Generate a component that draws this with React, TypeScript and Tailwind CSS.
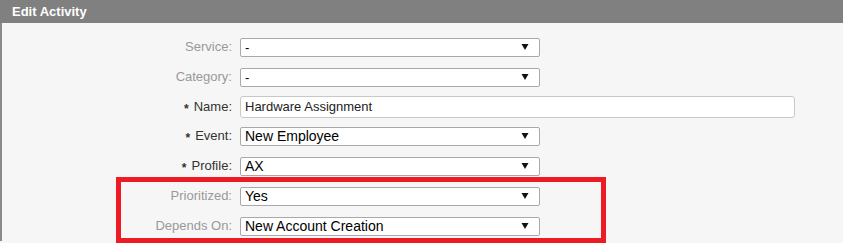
import React from "react";

const Arrow = () => (
  <svg width="8" height="7" viewBox="0 0 8 7" className="absolute right-[10px] top-1/2 -translate-y-1/2">
    <path d="M0.5 0.5 L7.5 0.5 L4 6.5 Z" fill="#111" />
  </svg>
);

const Select = ({ value, big }: { value: string; big?: boolean }) => (
  <div className="relative h-[19px] w-[300px] rounded-[2px] border border-[#a9a9a9] bg-white">
    <span
      className={`absolute left-[4px] top-1/2 -translate-y-1/2 leading-none text-black ${big ? "text-[14px]" : "text-[13px]"}`}
    >
      {value}
    </span>
    <Arrow />
  </div>
);

const Label = ({ text, req }: { text: string; req?: boolean }) => (
  <div className="flex w-[230px] shrink-0 items-center justify-end">
    {req && <span className="mr-[5px] translate-y-[2px] text-[12px] font-bold leading-none text-[#333]">*</span>}
    <span className={`text-[13px] ${req ? "text-[#333]" : "text-[#999]"}`}>{text}</span>
  </div>
);

export default function App() {
  return (
    <div
      className="relative h-[243px] w-[843px] overflow-hidden bg-[#f6f6f6]"
      style={{ fontFamily: '"Liberation Sans", Arial, sans-serif' }}
    >
      <div className="flex h-[23px] items-center bg-[#808080] pl-[12px] text-[13px] font-bold text-white">
        Edit Activity
      </div>
      <div className="border-l-2 border-[#8a8a8a] pt-[9px]">
        <div className="flex h-[30px] items-center gap-[8px]">
          <Label text="Service:" />
          <Select value="-" />
        </div>
        <div className="flex h-[30px] items-center gap-[8px]">
          <Label text="Category:" />
          <Select value="-" />
        </div>
        <div className="flex h-[29px] items-center gap-[8px]">
          <Label text="Name:" req />
          <div className="flex h-[22px] w-[555px] items-center rounded-[3px] border border-[#c8c8c8] bg-white pl-[4px] text-[13px] text-[#222]">
            Hardware Assignment
          </div>
        </div>
        <div className="flex h-[30px] items-center gap-[8px]">
          <Label text="Event:" req />
          <Select value="New Employee" big />
        </div>
        <div className="flex h-[30px] items-center gap-[8px]">
          <Label text="Profile:" req />
          <Select value="AX" big />
        </div>
        <div className="flex h-[30px] items-center gap-[8px]">
          <Label text="Prioritized:" />
          <Select value="Yes" big />
        </div>
        <div className="flex h-[30px] items-center gap-[8px]">
          <Label text="Depends On:" />
          <Select value="New Account Creation" big />
        </div>
      </div>
      <div className="pointer-events-none absolute left-[116px] top-[177px] h-[66px] w-[490px] border-[5px] border-[#ed1c24]" />
    </div>
  );
}
